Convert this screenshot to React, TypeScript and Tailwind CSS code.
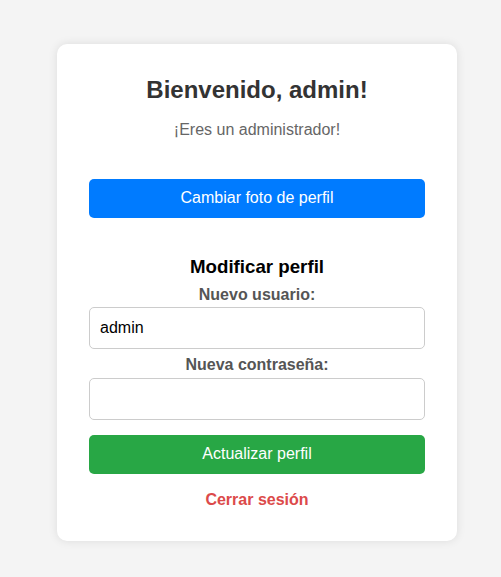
import React from "react";

export default function App() {
  return (
    <div
      className="min-h-[577px] w-full bg-[#f4f4f4] pt-[44px] pl-[57px] flex justify-start"
      style={{ fontFamily: '"Liberation Sans", Arial, sans-serif' }}
    >
      <div className="w-[400px] h-[497px] bg-white rounded-[10px] shadow-[0_0_10px_rgba(0,0,0,0.1)] p-[32px] flex flex-col text-center">
        <h2 className="text-[24px] leading-[27.6px] font-bold text-[#333]">Bienvenido, admin!</h2>
        <p className="mt-[17px] text-[16px] leading-[18.4px] text-[#666]">¡Eres un administrador!</p>
        <button className="mt-[40px] h-[39px] w-full rounded-[5px] bg-[#007bff] text-white text-[16px] leading-[18.4px]">
          Cambiar foto de perfil
        </button>
        <h3 className="mt-[38px] text-[18.72px] leading-[21.5px] font-bold text-black">Modificar perfil</h3>
        <label className="mt-[9px] block text-[16px] leading-[18.4px] font-bold text-[#555]">Nuevo usuario:</label>
        <input
          defaultValue="admin"
          className="mt-[2.6px] h-[41.4px] shrink-0 w-full rounded-[5px] border border-[#ccc] px-[10px] text-[16px] text-black outline-none"
          style={{ fontFamily: '"Liberation Sans", Arial, sans-serif' }}
        />
        <label className="mt-[7.6px] block text-[16px] leading-[18.4px] font-bold text-[#555]">Nueva contraseña:</label>
        <input
          type="password"
          className="mt-[3.4px] h-[41.4px] shrink-0 w-full rounded-[5px] border border-[#ccc] px-[10px] text-[16px] text-black outline-none"
        />
        <button className="mt-[15px] h-[39px] shrink-0 w-full rounded-[5px] bg-[#28a745] text-white text-[16px] leading-[18.4px]">
          Actualizar perfil
        </button>
        <a className="mt-[17px] block text-[16px] leading-[18.4px] font-bold text-[#dc4a4a] cursor-pointer">Cerrar sesión</a>
      </div>
    </div>
  );
}
